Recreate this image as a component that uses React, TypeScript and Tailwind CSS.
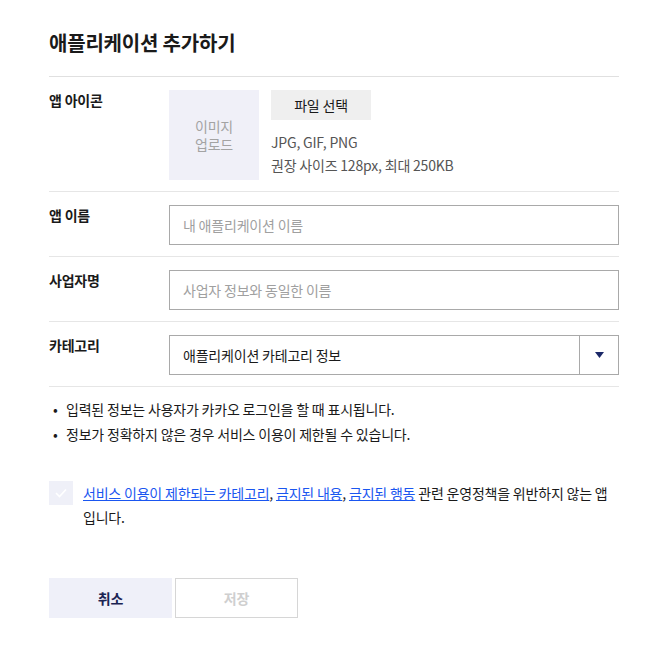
import React from 'react';

const font = { fontFamily: '"Noto Sans CJK KR", "Noto Sans", sans-serif' };

const Row: React.FC<{ label: string; children: React.ReactNode }> = ({ label, children }) => (
  <div className="flex border-b border-[#e6e6e6] pt-[13px] pb-[11px]">
    <div className="w-[120px] shrink-0 text-[14px] leading-[20px] font-bold text-[#1a1a1a]">{label}</div>
    <div className="flex-1">{children}</div>
  </div>
);

export default function App() {
  return (
    <div style={font} className="w-[665px] h-[653px] bg-white text-[#1a1a1a] tracking-[-0.2px]">
      <div className="px-[49px] pt-[29px] w-[668px]">
        <h1 className="text-[20px] leading-[28px] font-bold pb-[19px] border-b border-[#e0e0e0]">애플리케이션 추가하기</h1>

        <Row label="앱 아이콘">
          <div className="flex gap-[12px]">
            <div className="w-[90px] h-[90px] bg-[#f0f0f8] flex items-center justify-center text-center text-[14px] leading-[18px] text-[#a3a3a3]">
              이미지<br />업로드
            </div>
            <div>
              <button className="w-[100px] h-[30px] bg-[#efefef] text-[14px] text-[#1a1a1a]">파일 선택</button>
              <div className="mt-[11px] text-[14px] leading-[23px] text-[#555]">
                <p>JPG, GIF, PNG</p>
                <p>권장 사이즈 128px, 최대 250KB</p>
              </div>
            </div>
          </div>
        </Row>

        <Row label="앱 이름">
          <input placeholder="내 애플리케이션 이름" className="w-full h-[40px] border border-[#a9a9a9] px-[13px] text-[14px] placeholder:text-[#a0a0a0] outline-none" />
        </Row>

        <Row label="사업자명">
          <input placeholder="사업자 정보와 동일한 이름" className="w-full h-[40px] border border-[#a9a9a9] px-[13px] text-[14px] placeholder:text-[#a0a0a0] outline-none" />
        </Row>

        <Row label="카테고리">
          <div className="flex h-[40px] border border-[#a9a9a9]">
            <div className="flex-1 flex items-center px-[13px] text-[14px] text-[#1a1a1a]">애플리케이션 카테고리 정보</div>
            <div className="w-[39px] border-l border-[#a9a9a9] flex items-center justify-center">
              <svg width="9" height="6" viewBox="0 0 9 6"><path d="M0 0h9L4.5 6z" fill="#1b2868" /></svg>
            </div>
          </div>
        </Row>

        <ul className="pt-[10px] text-[14px] leading-[25px] text-[#1a1a1a]">
          <li className="flex"><span className="w-[17px] pl-[4px]">•</span>입력된 정보는 사용자가 카카오 로그인을 할 때 표시됩니다.</li>
          <li className="flex"><span className="w-[17px] pl-[4px]">•</span>정보가 정확하지 않은 경우 서비스 이용이 제한될 수 있습니다.</li>
        </ul>

        <div className="flex gap-[10px] mt-[34px]">
          <div className="w-[24px] h-[24px] shrink-0 bg-[#eff0f8] flex items-center justify-center">
            <svg width="12" height="10" viewBox="0 0 12 10"><path d="M1 5l3.5 3.5L11 1.5" stroke="#fff" strokeWidth="1.6" fill="none" /></svg>
          </div>
          <p className="text-[14px] leading-[24px] text-[#1a1a1a] break-keep">
            <a className="text-[#1a56f0] underline">서비스 이용이 제한되는 카테고리</a>,{' '}
            <a className="text-[#1a56f0] underline">금지된 내용</a>,{' '}
            <a className="text-[#1a56f0] underline">금지된 행동</a> 관련 운영정책을 위반하지 않는 앱 입니다.
          </p>
        </div>

        <div className="flex gap-[3px] mt-[49px]">
          <button className="w-[123px] h-[40px] bg-[#eff0f9] text-[14px] font-bold text-[#1b2353]">취소</button>
          <button className="w-[123px] h-[40px] border border-[#d6d6d6] bg-white text-[14px] font-bold text-[#cfcfcf]">저장</button>
        </div>
      </div>
    </div>
  );
}
